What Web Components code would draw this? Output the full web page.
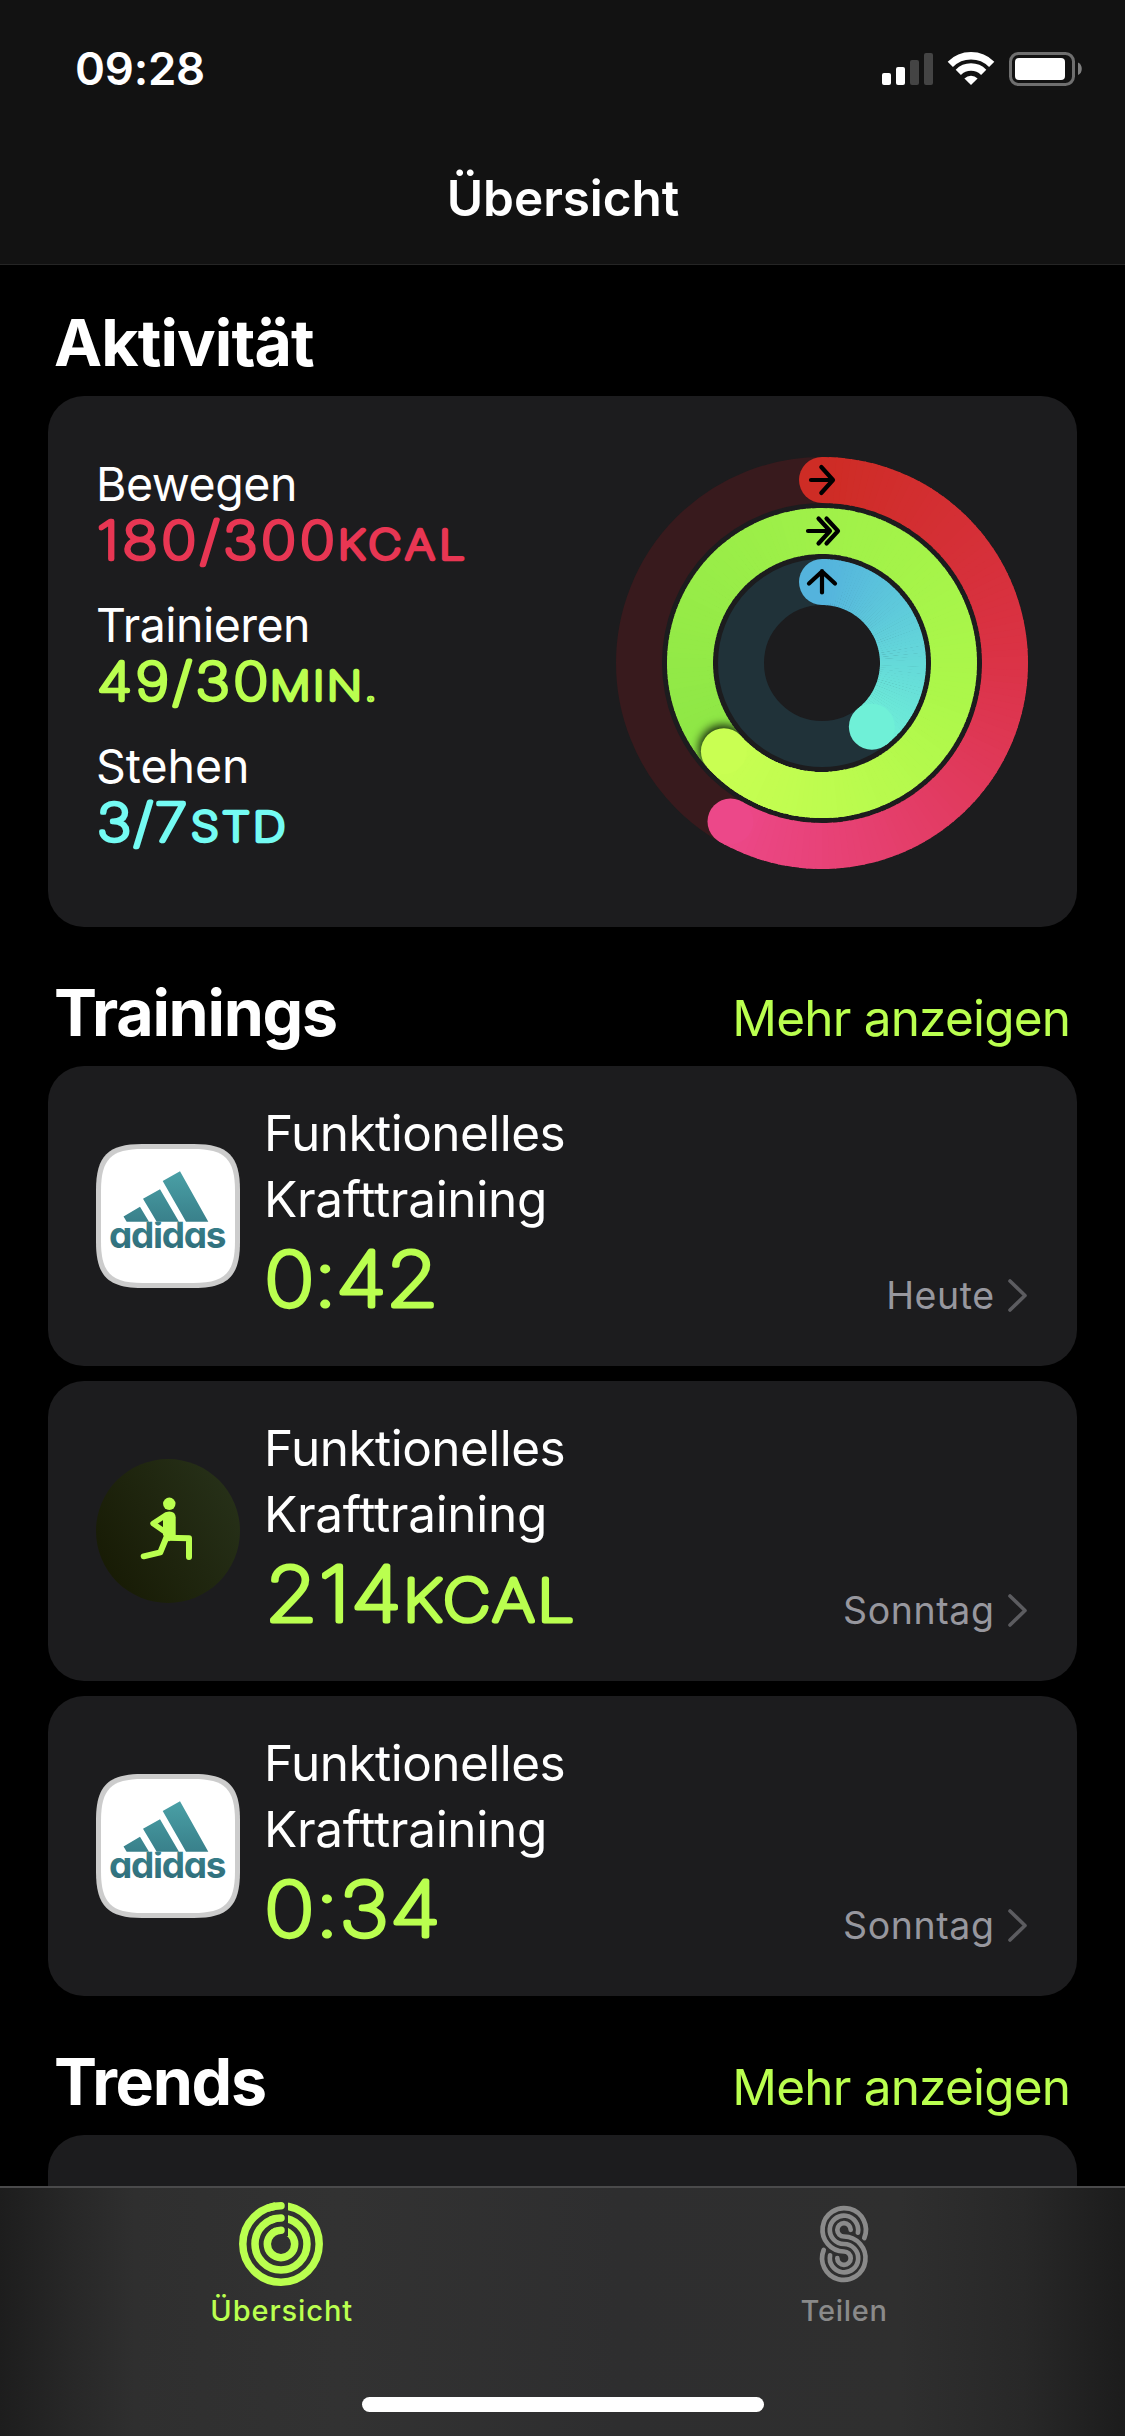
<!DOCTYPE html>
<html lang="de">
<head>
<meta charset="utf-8">
<title>Übersicht</title>
<style>
  html, body { margin: 0; background: #000; }
  body {
    width: 1125px;
    height: 2436px;
    overflow: hidden;
    color: #fff;
    font-family: Inter, "Liberation Sans", sans-serif;
  }
</style>
</head>
<body>
<fitness-app>
  <nav-header slot="header" time="09:28" heading="Übersicht"></nav-header>

  <list-section heading="Aktivität" heading-width="259" first>
    <activity-card></activity-card>
  </list-section>

  <list-section heading="Trainings" heading-width="280" more="Mehr anzeigen">
    <workout-card when="Heute" when-width="104">
      <adidas-icon slot="icon"></adidas-icon>
      <round-text slot="value" parts="0:42|75|3|170"></round-text>
    </workout-card>
    <workout-card when="Sonntag" when-width="147">
      <lunge-icon slot="icon"></lunge-icon>
      <round-text slot="value" parts="214|75|5|135;KCAL|58|143|309"></round-text>
    </workout-card>
    <workout-card when="Sonntag" when-width="147">
      <adidas-icon slot="icon"></adidas-icon>
      <round-text slot="value" parts="0:34|75|3|174"></round-text>
    </workout-card>
  </list-section>

  <list-section heading="Trends" heading-width="209" more="Mehr anzeigen">
    <panel-card style="height: 300px"></panel-card>
  </list-section>

  <tab-bar slot="tabs"></tab-bar>
</fitness-app>

<script>
(() => {
  "use strict";

  const ctx = document.createElement("canvas").getContext("2d");

  // Ink box of a string: left bearing and drawn width
  function inkBox(text, size, weight) {
    ctx.font = `${weight} ${size}px Inter`;
    const m = ctx.measureText(text);
    return {
      left: -m.actualBoundingBoxLeft,
      width: m.actualBoundingBoxRight + m.actualBoundingBoxLeft,
    };
  }

  // Letter spacing that makes the drawn text exactly `width` wide
  function tracking(text, size, weight, width) {
    return (width - inkBox(text, size, weight).width) / (text.length - 1);
  }

  function define(name, render) {
    customElements.define(name, class extends HTMLElement {
      connectedCallback() {
        if (this.shadowRoot) return;
        this.attachShadow({ mode: "open" }).innerHTML = render(this);
      }
    });
  }

  // Plain text, tracked to a given width
  define("text-run", (el) => {
    const text = el.textContent.trim();
    const size = +el.getAttribute("size");
    const weight = el.getAttribute("weight") || "400";
    const spacing = tracking(text, size, weight, +el.getAttribute("fit"));
    return `
      <style>
        :host { display: block; white-space: nowrap; }
        span {
          display: block;
          font-size: ${size}px;
          font-weight: ${weight};
          line-height: ${el.getAttribute("line") || 66}px;
          letter-spacing: ${spacing}px;
          margin-right: ${-spacing}px;
        }
      </style>
      <span><slot></slot></span>`;
  });

  // The thin weight is narrow, so the glyphs are widened by this factor
  const STRETCH = 1.13;

  // Text with rounded terminals: a thin weight thickened with a round stroke.
  // parts: "text|size|left|right" separated by ";"
  define("round-text", (el) => {
    const height = +el.getAttribute("height") || 90;
    const base = +el.getAttribute("base") || 77;
    const bold = +el.getAttribute("bold") || 5;
    const color = el.getAttribute("color") || "#baff4f";
    const parts = el.getAttribute("parts").split(";").map((part) => {
      const [text, size, left, right] = part.split("|");
      const ink = inkBox(text, +size, 100);
      const width = (right - left) / STRETCH - bold;
      const spacing = (width - ink.width) / (text.length - 1);
      const x = left / STRETCH + bold / 2 - ink.left;
      return `<text transform="scale(${STRETCH} 1)" x="${x}" y="${base - bold / 2}" font-size="${size}" letter-spacing="${spacing}">${text}</text>`;
    });
    return `
      <style>
        :host { display: block; }
        svg { display: block; overflow: visible; }
        text {
          font-family: Inter, "Liberation Sans", sans-serif;
          font-weight: 100;
          fill: ${color};
          stroke: ${color};
          stroke-width: ${bold}px;
          stroke-linejoin: round;
          stroke-linecap: round;
        }
      </style>
      <svg width="400" height="${height}">${parts.join("")}</svg>`;
  });

  define("fitness-app", () => `
    <style>
      :host { display: flex; flex-direction: column; height: 2436px; }
      main { flex: 1; min-height: 0; overflow: hidden; padding: 0 48px; }
    </style>
    <slot name="header"></slot>
    <main><slot></slot></main>
    <slot name="tabs"></slot>`);

  define("nav-header", (el) => `
    <style>
      :host { display: block; background: #121212; border-bottom: 1px solid #252525; }
      .status {
        display: flex; align-items: center; justify-content: space-between;
        height: 137px; padding: 0 43px 0 75px;
      }
      .title { display: flex; justify-content: center; align-items: center; height: 122px; padding: 0 0 5px 1px; }
    </style>
    <div class="status">
      <text-run size="45.5" weight="600" fit="126">${el.getAttribute("time")}</text-run>
      <status-icons></status-icons>
    </div>
    <div class="title"><text-run size="49.5" weight="600" fit="229">${el.getAttribute("heading")}</text-run></div>`);

  define("status-icons", () => `
    <style>:host { display: block; } svg { display: block; }</style>
    <svg width="201" height="36" viewBox="881 51 201 36">
      <rect x="882" y="73" width="9" height="12" rx="2" fill="#fff"/>
      <rect x="896" y="67" width="9" height="18" rx="2" fill="#fff"/>
      <rect x="910" y="60" width="9" height="25" rx="2" fill="#444"/>
      <rect x="924" y="53" width="9" height="32" rx="2" fill="#444"/>
      <g fill="none" stroke="#fff" stroke-width="7.4">
        <path d="M950.3 64.3a29.3 29.3 0 0 1 41.4 0"/>
        <path d="M958.3 72.3a18 18 0 0 1 25.4 0"/>
      </g>
      <path d="M971 85l-6.600-6.600a9.500 9.500 0 0 1 13.200 0z" fill="#fff"/>
      <rect x="1010.500" y="53.500" width="63" height="31" rx="8" fill="none" stroke="#6f6f6f" stroke-width="3"/>
      <rect x="1015" y="58" width="50" height="22" rx="4" fill="#fff"/>
      <path d="M1078 62.500c5 1.500 5 11 0 12.500z" fill="#7f7f7f"/>
    </svg>`);

  define("list-section", (el) => `
    <style>
      :host { display: block; }
      header {
        display: flex; justify-content: space-between; align-items: baseline;
        padding: ${el.hasAttribute("first") ? 39 : 47}px 6px 14px 6px;
      }
      .more { color: #baff4f; }
      .items { display: flex; flex-direction: column; gap: 15px; }
    </style>
    <header>
      <text-run size="64.5" weight="700" line="78" fit="${el.getAttribute("heading-width")}">${el.getAttribute("heading")}</text-run>
      ${el.hasAttribute("more") ? `<text-run class="more" size="49.5" fit="331.5">${el.getAttribute("more")}</text-run>` : ""}
    </header>
    <div class="items"><slot></slot></div>`);

  define("panel-card", () => `
    <style>
      :host { display: block; box-sizing: border-box; background: #1c1c1e; border-radius: 36px; }
    </style>
    <slot></slot>`);

  define("activity-card", () => `
    <style>
      .row { display: flex; justify-content: space-between; box-sizing: border-box; height: 531px; padding: 60px 49px 0 48px; }
      .goals { display: flex; flex-direction: column; gap: 25px; }
      activity-rings { margin-top: 1px; }
    </style>
    <panel-card>
      <div class="row">
        <div class="goals">
          <div>
            <text-run size="46.5" line="56" fit="194">Bewegen</text-run>
            <round-text color="#e83653" height="60" base="49" bold="4.4" parts="180/300|52|2|237;KCAL|40|244|368.5"></round-text>
          </div>
          <div>
            <text-run size="46.5" line="56" fit="209">Trainieren</text-run>
            <round-text color="#baff4f" height="60" base="49" bold="4.4" parts="49/30|52|2|170.5;MIN.|40|176|279"></round-text>
          </div>
          <div>
            <text-run size="46.5" line="56" fit="148">Stehen</text-run>
            <round-text color="#74fbf3" height="60" base="49" bold="4.4" parts="3/7|52|3|91;STD|40|96|189"></round-text>
          </div>
        </div>
        <activity-rings></activity-rings>
      </div>
    </panel-card>`);

  const point = (r, deg) => {
    const a = (deg * Math.PI) / 180;
    return `${(r * Math.sin(a)).toFixed(2)} ${(-r * Math.cos(a)).toFixed(2)}`;
  };

  const mix = (stops, t) => {
    let i = 0;
    while (i < stops.length - 2 && t > stops[i + 1][0]) i++;
    const [t0, a] = stops[i];
    const [t1, b] = stops[i + 1];
    const k = Math.min(1, Math.max(0, (t - t0) / (t1 - t0)));
    return `rgb(${a.map((v, n) => Math.round(v + (b[n] - v) * k)).join(",")})`;
  };

  // Arc from `from` to `to` degrees, painted in small slices so that the
  // colour follows the ring
  function sweep(r, from, to, stops, only = from) {
    let out = "";
    for (let a = only; a < to; a += 2) {
      const end = Math.min(to, a + 2.4);
      out += `<path d="M${point(r, a)}A${r} ${r} 0 0 1 ${point(r, end)}" stroke="${mix(stops, (a - from) / (to - from))}"/>`;
    }
    return out;
  }

  const cap = (r, deg, fill) => {
    const [x, y] = point(r, deg).split(" ");
    return `<circle cx="${x}" cy="${y}" r="23" fill="${fill}" stroke="none"/>`;
  };

  define("activity-rings", () => {
    const red = [[0, [206, 44, 37]], [0.4, [218, 50, 68]], [1, [236, 72, 137]]];
    const green = [[0, [141, 230, 70]], [0.37, [160, 241, 73]], [0.65, [172, 247, 74]], [1, [201, 255, 82]]];
    const blue = [[0, [84, 179, 221]], [1, [111, 240, 215]]];
    return `
    <style>:host { display: block; } svg { display: block; }</style>
    <svg width="412" height="412" viewBox="-206 -206 412 412" fill="none" stroke-width="46">
      <defs>
        <filter id="blur" x="-50%" y="-50%" width="200%" height="200%"><feGaussianBlur stdDeviation="5"/></filter>
        <mask id="band" maskUnits="userSpaceOnUse" x="-206" y="-206" width="412" height="412"><circle r="132" stroke="#fff"/></mask>
      </defs>
      <circle r="183" stroke="#381a1d"/>
      ${cap(183, 0, mix(red, 0))}
      ${sweep(183, 0, 210, red)}
      ${cap(183, 210, mix(red, 1))}
      ${sweep(132, 228, 588, green)}
      <g mask="url(#band)"><circle cx="-99" cy="86" r="24" fill="#000" fill-opacity=".85" filter="url(#blur)"/></g>
      ${sweep(132, 228, 588, green, 528)}
      ${cap(132, 588, mix(green, 1))}
      <circle r="81" stroke="#203239"/>
      ${cap(81, 0, mix(blue, 0))}
      ${sweep(81, 0, 142, blue)}
      ${cap(81, 142, mix(blue, 1))}
      <g stroke="#000" stroke-width="4.200" stroke-linecap="round" stroke-linejoin="round">
        <path d="M-11-183H10.500M-.7-196L11-183-.7-170"/>
        <path d="M-14-132H8M-3.500-144.500L8-132-3.500-119.500M4.500-144.500L16-132 4.500-119.500"/>
        <path d="M0-70.500V-92M-13-79.500L0-91.500 13-79.500"/>
      </g>
    </svg>`;
  });

  define("workout-card", (el) => `
    <style>
      .row { display: flex; box-sizing: border-box; height: 300px; padding: 0 50px 0 48px; }
      .icon { align-self: center; }
      .info { flex: 1; padding: 34px 0 0 24px; }
      .meta { display: flex; align-items: center; align-self: flex-end; gap: 14px; padding-bottom: 48px; color: #97979e; }
      svg { display: block; }
    </style>
    <panel-card>
      <div class="row">
        <div class="icon"><slot name="icon"></slot></div>
        <div class="info">
          <text-run size="49.5" fit="295.5">Funktionelles</text-run>
          <text-run size="49.5" fit="276">Krafttraining</text-run>
          <slot name="value"></slot>
        </div>
        <div class="meta">
          <text-run size="37.5" line="45" fit="${el.getAttribute("when-width")}">${el.getAttribute("when")}</text-run>
          <svg width="19" height="33" fill="none" stroke="#5c5c60" stroke-width="3.600" stroke-linecap="round" stroke-linejoin="round">
            <path d="M2 2l15 14.500L2 31"/>
          </svg>
        </div>
      </div>
    </panel-card>`);

  define("adidas-icon", () => {
    const spacing = tracking("adidas", 37, 700, 112);
    return `
    <style>
      :host { display: block; }
      svg { display: block; }
      text { font: 700 37px Inter, sans-serif; font-feature-settings: "cv11" 1; letter-spacing: ${spacing}px; }
    </style>
    <svg width="144" height="144">
      <defs>
        <linearGradient id="teal" gradientUnits="userSpaceOnUse" x1="0" y1="27" x2="0" y2="105">
          <stop offset="0" stop-color="#4aa0a6"/><stop offset="1" stop-color="#306f7c"/>
        </linearGradient>
        <clipPath id="word"><rect x="10" y="77.800" width="124" height="40"/></clipPath>
      </defs>
      <path d="M0 46C0 12 12 0 46 0H98C132 0 144 12 144 46V98C144 132 132 144 98 144H46C12 144 0 132 0 98Z" fill="#ccc"/>
      <path d="M5 47C5 15 15 5 47 5H97C129 5 139 15 139 47V97C139 129 129 139 97 139H47C15 139 5 129 5 97Z" fill="#fff"/>
      <g fill="url(#teal)">
        <path d="M27.500 72.500L44 62.700 53 77.700H30.700ZM47 54.700L64 45.300 83 77.700H60.700ZM66.700 37L84 27.300 112.300 77.700H90Z"/>
        <text x="13" y="104" clip-path="url(#word)">adidas</text>
      </g>
    </svg>`;
  });

  define("lunge-icon", () => `
    <style>:host { display: block; } svg { display: block; }</style>
    <svg width="144" height="144">
      <defs>
        <linearGradient id="moss" x1="0" y1=".8" x2="1" y2=".2">
          <stop offset="0" stop-color="#171a04"/><stop offset="1" stop-color="#273119"/>
        </linearGradient>
      </defs>
      <circle cx="72" cy="72" r="72" fill="url(#moss)"/>
      <g fill="none" stroke="#baff4f" stroke-width="6" stroke-linecap="round" stroke-linejoin="round">
        <circle cx="73.300" cy="44.800" r="6.200" fill="#baff4f" stroke="none"/>
        <path d="M70 56L57 64.500 70 73.500" stroke-width="5.400"/>
        <path d="M67 58.500Q67 52.500 73.300 52.500T79.700 58.500V75.500L73 82.500 67 76Z" fill="#baff4f" stroke="none"/>
        <path d="M71 78.800L93 79.300V98"/>
        <path d="M71 77L64.300 93.300 47.700 97.300"/>
      </g>
    </svg>`);

  define("tab-bar", () => `
    <style>
      :host {
        display: flex; flex-direction: column; box-sizing: border-box; height: 250px;
        border-top: 2px solid #4a4a4b;
        background: linear-gradient(90deg, #1d1d1d, #272727 6%, #2f2f2f 12%, #323232 30%, #2e2e2f 55%, #2f2f2f 80%, #282828 91%, #1c1c1c);
      }
      .tabs { display: grid; grid-template-columns: 1fr 1fr; flex: 1; }
      .tab { display: flex; flex-direction: column; align-items: center; gap: 7px; padding-top: 14px; }
      .on { color: #baff4f; }
      .off { color: #8a8a8a; }
      .home { width: 402px; height: 15px; border-radius: 7.5px; background: #fff; align-self: center; margin-bottom: 24px; }
      svg { display: block; }
    </style>
    <div class="tabs">
      <div class="tab on">
        <svg width="84" height="84" viewBox="-42 -42 84 84" fill="none" stroke="currentColor" stroke-width="7.500">
          <defs>
            <mask id="gap" maskUnits="userSpaceOnUse" x="-42" y="-42" width="84" height="84">
              <rect x="-42" y="-42" width="84" height="84" fill="#fff" stroke="none"/>
              <path d="M.5-42V-8" stroke="#000" stroke-width="13"/>
            </mask>
          </defs>
          <g mask="url(#gap)"><circle r="38.200"/><circle r="26"/><circle r="13.700"/></g>
          <g stroke-linecap="round">
            <path d="M-12-36.260A38.200 38.200 0 0 1 0-38.200"/>
            <path d="M-9-24.390A26 26 0 0 1 0-26"/>
            <path d="M-7.500-11.460A13.700 13.700 0 0 1 0-13.700"/>
          </g>
        </svg>
        <text-run size="29" weight="500" line="36" fit="140">Übersicht</text-run>
      </div>
      <div class="tab off">
        <svg width="84" height="84" viewBox="-42 -42 84 84" fill="none" stroke="currentColor" stroke-width="4.700" stroke-linecap="round">
          <path d="M20.300-6A21.700 21.700 0 1 0 0 7.500A6.700 6.700 0 1 1-6.700 14.200"/>
          <path d="M13.900-11.400A14.200 14.200 0 1 0 0 0A14.200 14.200 0 1 1-13.900 11.400"/>
          <path d="M6.700-14.200A6.700 6.700 0 1 0 0-7.500A21.700 21.700 0 1 1-20.300 6"/>
        </svg>
        <text-run size="29" weight="500" line="36" fit="84">Teilen</text-run>
      </div>
    </div>
    <div class="home"></div>`);
})();
</script>
</body>
</html>
